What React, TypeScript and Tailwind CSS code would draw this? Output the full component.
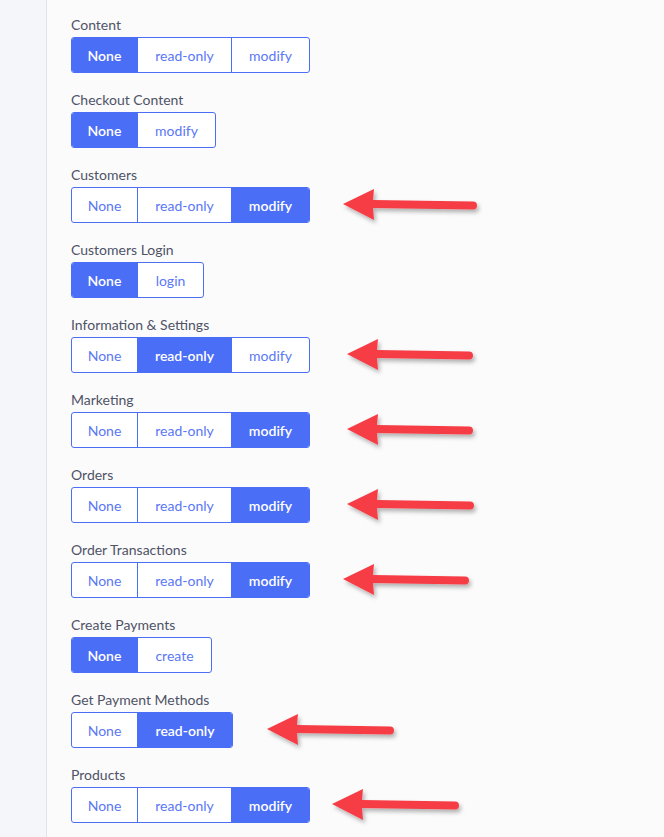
import React from 'react'

type Row = { label: string; options: string[]; widths: number[]; selected: number; arrow?: [number, number] }

const rows: Row[] = [
  { label: 'Content', options: ['None', 'read-only', 'modify'], widths: [66, 94, 78], selected: 0 },
  { label: 'Checkout Content', options: ['None', 'modify'], widths: [66, 78], selected: 0 },
  { label: 'Customers', options: ['None', 'read-only', 'modify'], widths: [66, 94, 78], selected: 2, arrow: [33, 135] },
  { label: 'Customers Login', options: ['None', 'login'], widths: [66, 66], selected: 0 },
  { label: 'Information & Settings', options: ['None', 'read-only', 'modify'], widths: [66, 94, 78], selected: 1, arrow: [37, 127] },
  { label: 'Marketing', options: ['None', 'read-only', 'modify'], widths: [66, 94, 78], selected: 2, arrow: [37, 127] },
  { label: 'Orders', options: ['None', 'read-only', 'modify'], widths: [66, 94, 78], selected: 2, arrow: [37, 128] },
  { label: 'Order Transactions', options: ['None', 'read-only', 'modify'], widths: [66, 94, 78], selected: 2, arrow: [33, 127] },
  { label: 'Create Payments', options: ['None', 'create'], widths: [66, 74], selected: 0 },
  { label: 'Get Payment Methods', options: ['None', 'read-only'], widths: [66, 95], selected: 1, arrow: [34, 128] },
  { label: 'Products', options: ['None', 'read-only', 'modify'], widths: [66, 94, 78], selected: 2, arrow: [22, 128] },
]

function Arrow({ length }: { length: number }) {
  const end = length - 5
  return (
    <svg width={length} height="36" viewBox={`0 2 ${length} 36`} className="overflow-visible">
      <defs>
        <filter id="sh" x="-10%" y="-30%" width="130%" height="180%">
          <feDropShadow dx="2" dy="3" stdDeviation="2" floodColor="#000" floodOpacity="0.3" />
        </filter>
      </defs>
      <g filter="url(#sh)" fill="#f63d45">
        <path d={`M0 19 L31 4 L30 15 L${end} 16.5 A4 4 0 0 1 ${end} 24.5 L30 23 L31 35 Z`} />
      </g>
    </svg>
  )
}

function Segmented({ row }: { row: Row }) {
  return (
    <div className="flex h-9 rounded-[3px] border border-[#4b6ef7] overflow-hidden bg-white">
      {row.options.map((opt, i) => {
        const sel = i === row.selected
        return (
          <div
            key={opt}
            style={{ width: row.widths[i] - (i === 0 ? 1 : 0) }}
            className={
              'flex items-center justify-center text-[14px] ' +
              (i > 0 ? 'border-l border-[#4b6ef7] ' : '') +
              (sel ? 'bg-[#4b6ef7] text-white font-semibold' : 'text-[#5a78f5]')
            }
          >
            {opt}
          </div>
        )
      })}
    </div>
  )
}

export default function App() {
  return (
    <div className="flex h-[837px] w-[664px] bg-[#fbfbfc]" style={{ fontFamily: 'Lato, "Open Sans", sans-serif' }}>
      <div className="w-[47px] shrink-0 bg-[#f4f6f9] border-r border-[#dfe3ea]" />
      <div className="flex flex-col gap-[17px] pl-[24px] pt-[15px]">
        {rows.map((row) => (
          <div key={row.label} className="flex flex-col gap-[2px]">
            <div className="h-5 leading-5 text-[14px] text-[#4f5366]">{row.label}</div>
            <div className="flex h-9 items-center">
              <Segmented row={row} />
              {row.arrow && (
                <div style={{ marginLeft: row.arrow[0] }} className="flex h-9 items-center">
                  <Arrow length={row.arrow[1]} />
                </div>
              )}
            </div>
          </div>
        ))}
      </div>
    </div>
  )
}
